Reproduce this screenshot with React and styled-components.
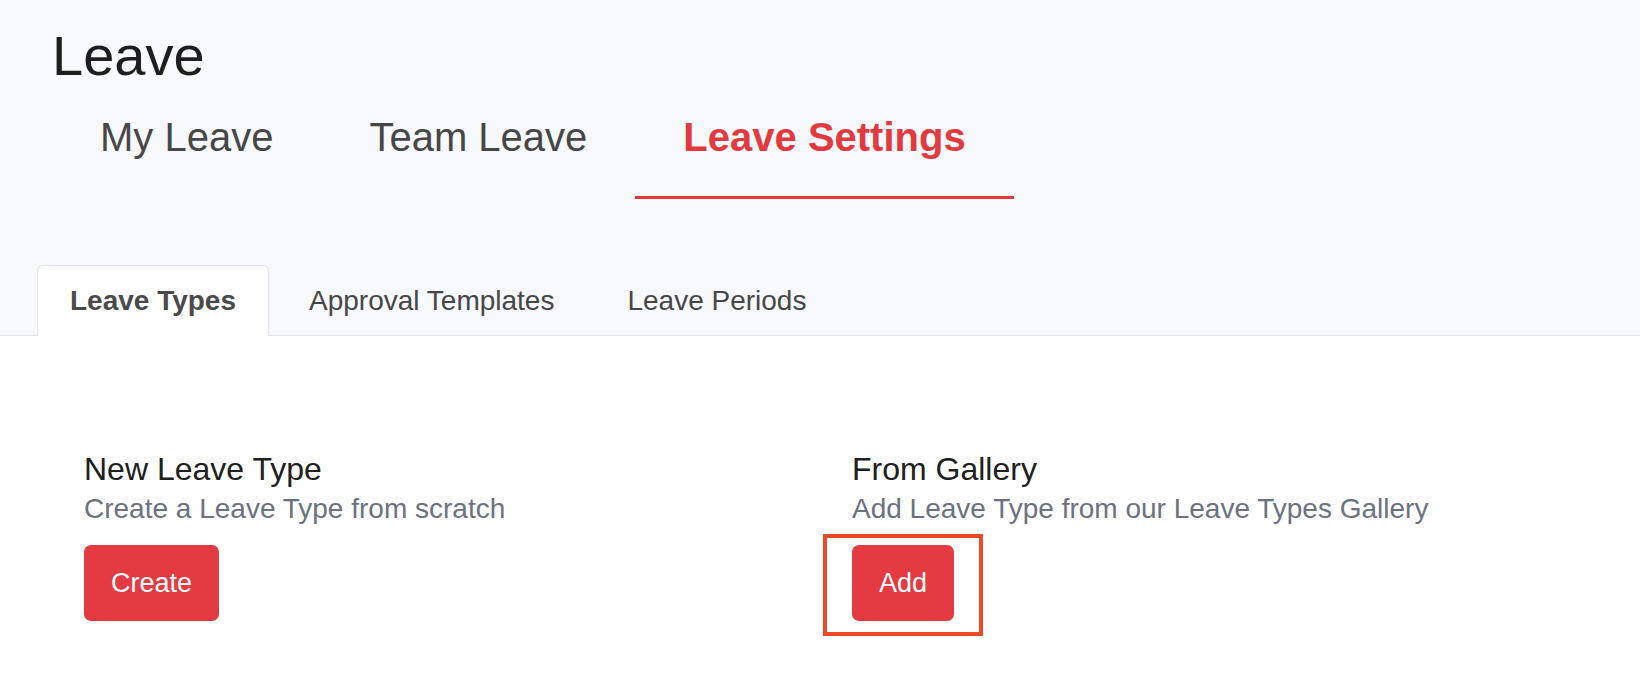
import React, { useState } from "react";
import styled, { createGlobalStyle } from "styled-components";

const GlobalStyle = createGlobalStyle`
  html, body {
    margin: 0;
    padding: 0;
    background: #ffffff;
    font-family: "Liberation Sans", Arial, sans-serif;
  }
  * { box-sizing: border-box; }
`;

const mainTabs = ["My Leave", "Team Leave", "Leave Settings"];
const subTabs = ["Leave Types", "Approval Templates", "Leave Periods"];

function App() {
  const [mainTab, setMainTab] = useState(2);
  const [subTab, setSubTab] = useState(0);

  return (
    <Page>
      <GlobalStyle />
      <Header>
        <Title>Leave</Title>
        <MainTabs>
          {mainTabs.map((t, i) => (
            <MainTab key={t} active={i === mainTab} onClick={() => setMainTab(i)}>
              {t}
            </MainTab>
          ))}
        </MainTabs>
        <SubTabs>
          {subTabs.map((t, i) => (
            <SubTab key={t} active={i === subTab} onClick={() => setSubTab(i)}>
              {t}
            </SubTab>
          ))}
        </SubTabs>
      </Header>
      <Content>
        <Option>
          <OptionTitle>New Leave Type</OptionTitle>
          <OptionText>Create a Leave Type from scratch</OptionText>
          <Button>Create</Button>
        </Option>
        <Option>
          <OptionTitle>From Gallery</OptionTitle>
          <OptionText>Add Leave Type from our Leave Types Gallery</OptionText>
          <Highlight>
            <Button>Add</Button>
          </Highlight>
        </Option>
      </Content>
    </Page>
  );
}

export default App;

const Page = styled.div`
  min-height: 688px;
  background: #ffffff;
`;

const Header = styled.div`
  background: #f8f9fc;
  padding: 28px 0 0 52px;
  border-bottom: 1px solid #e2e4ea;
`;

const Title = styled.h1`
  margin: 0;
  font-size: 56px;
  line-height: 56px;
  font-weight: 400;
  color: #1e1e1e;
`;

const MainTabs = styled.div`
  display: flex;
  margin-top: 34px;
`;

const MainTab = styled.div`
  padding: 0 48px 39px;
  font-size: 40px;
  line-height: 39px;
  font-weight: ${(p) => (p.active ? 700 : 400)};
  color: ${(p) => (p.active ? "#e53940" : "#474747")};
  border-bottom: 3px solid ${(p) => (p.active ? "#e53940" : "transparent")};
  cursor: pointer;
`;

const SubTabs = styled.div`
  display: flex;
  gap: 7px;
  margin: 66px 0 -1px -15px;
`;

const SubTab = styled.div`
  padding: 21px 32px 22px;
  font-size: 28px;
  line-height: 27px;
  font-weight: ${(p) => (p.active ? 700 : 400)};
  color: ${(p) => (p.active ? "#4a4a4a" : "#474747")};
  background: ${(p) => (p.active ? "#ffffff" : "transparent")};
  border: 1px solid ${(p) => (p.active ? "#e2e4ea" : "transparent")};
  border-bottom: none;
  border-radius: 6px 6px 0 0;
  cursor: pointer;
`;

const Content = styled.div`
  display: grid;
  grid-template-columns: 768px 1fr;
  padding: 118px 0 0 84px;
`;

const Option = styled.div`
  display: flex;
  flex-direction: column;
  align-items: flex-start;
`;

const OptionTitle = styled.div`
  font-size: 32px;
  line-height: 31px;
  color: #202020;
`;

const OptionText = styled.div`
  margin-top: 10px;
  font-size: 28px;
  line-height: 28px;
  color: #6b7280;
`;

const Highlight = styled.div`
  position: relative;
  margin-top: 22px;
  &::after {
    content: "";
    position: absolute;
    top: -11px;
    left: -29px;
    right: -29px;
    bottom: -15px;
    border: 4px solid #ec4a27;
    pointer-events: none;
  }
  & > button {
    margin-top: 0;
  }
`;

const Button = styled.button`
  margin-top: 22px;
  padding: 24px 27px;
  font-family: "Liberation Sans", Arial, sans-serif;
  font-size: 27px;
  line-height: 28px;
  color: #ffffff;
  background: #e43a41;
  border: none;
  border-radius: 7px;
  cursor: pointer;
  outline: none;
`;
